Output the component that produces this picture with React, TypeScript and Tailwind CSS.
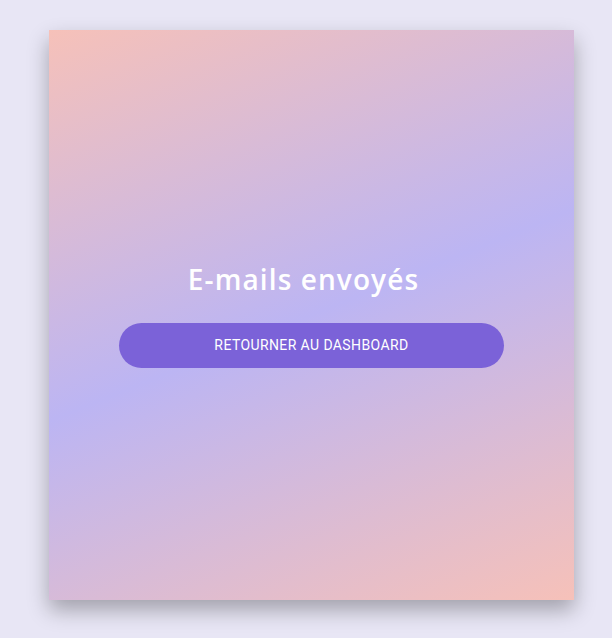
export default function App() {
  return (
    <div className="min-h-screen w-full bg-[#e8e6f5] pt-[30px] pl-[49px]">
      {/* Card */}
      <div
        className="w-[525px] h-[570px] flex flex-col items-center justify-center shadow-[0_10px_20px_rgba(0,0,0,0.3)]"
        style={{ backgroundImage: "linear-gradient(158deg, #f6c1b9 0%, #bcb5f3 50%, #f6c1b9 100%)" }}
      >
        <h1 className="mr-[16px] text-white text-[28px] leading-[36px] tracking-[1.1px] font-semibold font-['Open_Sans',sans-serif]">
          E-mails envoyés
        </h1>
        <button className="mt-[26px] mb-[1px] w-[385px] h-[45px] rounded-full bg-[#7b62d8] text-white text-[14px] tracking-[0.4px] font-['Roboto',sans-serif] uppercase">
          Retourner au dashboard
        </button>
      </div>
    </div>
  );
}
